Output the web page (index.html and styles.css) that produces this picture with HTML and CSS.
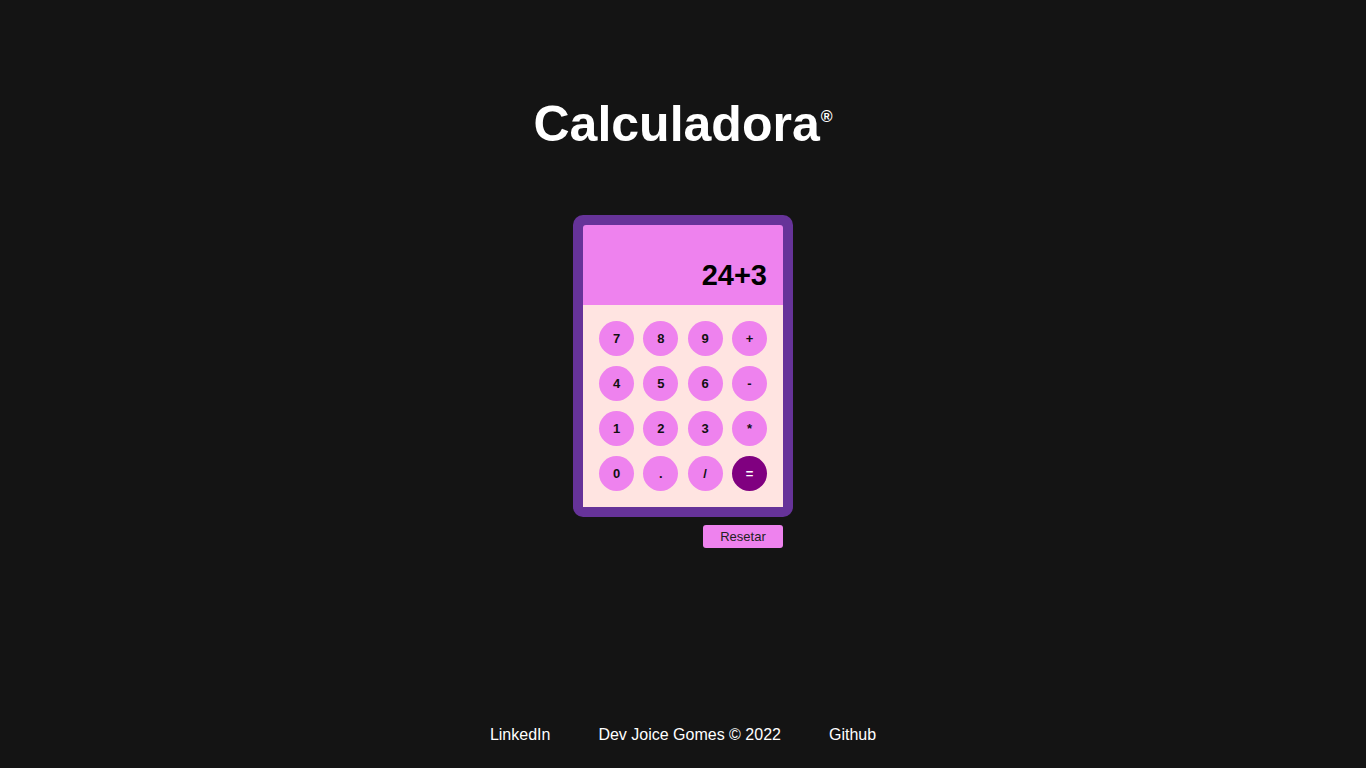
FILE: index.html
```html
<!DOCTYPE html>
<html lang="pt-BR">
<head>
<meta charset="UTF-8">
<title>Calculadora</title>
<link rel="stylesheet" href="styles.css">
</head>
<body>
<div class="page">
  <header class="header">
    <h1 class="title">Calculadora<sup class="reg">®</sup></h1>
  </header>
  <main class="main">
    <div class="calc">
      <div class="display">24+3</div>
      <div class="keys">
        <button class="key">7</button>
        <button class="key">8</button>
        <button class="key">9</button>
        <button class="key">+</button>
        <button class="key">4</button>
        <button class="key">5</button>
        <button class="key">6</button>
        <button class="key">-</button>
        <button class="key">1</button>
        <button class="key">2</button>
        <button class="key">3</button>
        <button class="key">*</button>
        <button class="key">0</button>
        <button class="key">.</button>
        <button class="key">/</button>
        <button class="key key-eq">=</button>
      </div>
    </div>
    <div class="actions">
      <button class="reset">Resetar</button>
    </div>
  </main>
  <footer class="footer">
    <a class="flink" href="#">LinkedIn</a>
    <span class="ftext">Dev Joice Gomes © 2022</span>
    <a class="flink" href="#">Github</a>
  </footer>
</div>
</body>
</html>
```
FILE: styles.css
```css
* { box-sizing: border-box; }
html, body { margin: 0; padding: 0; }
body {
  background: #141414;
  font-family: "Liberation Sans", Arial, sans-serif;
  color: #fff;
}
.page {
  min-height: 100vh;
  display: flex;
  flex-direction: column;
  align-items: center;
}
.header { padding-top: 96px; }
.title {
  margin: 0;
  font-size: 50px;
  font-weight: bold;
  line-height: 57px;
  text-align: center;
}
.reg {
  font-size: 16px;
  font-weight: bold;
  line-height: 16px;
  vertical-align: top;
  position: relative;
  top: 13px;
  margin-left: 1px;
}
.main {
  margin-top: 62px;
  display: flex;
  flex-direction: column;
  width: 220px;
}
.calc {
  background: #663399;
  border-radius: 10px;
  padding: 10px;
}
.display {
  height: 80px;
  background: #ee82ee;
  border-radius: 3px 3px 0 0;
  color: #000;
  font-size: 29px;
  font-weight: bold;
  display: flex;
  justify-content: flex-end;
  align-items: flex-end;
  padding: 0 16px 13px;
  line-height: 33px;
}
.keys {
  background: #ffe4e1;
  padding: 16px;
  display: grid;
  grid-template-columns: repeat(4, 35px);
  justify-content: space-between;
  row-gap: 10px;
}
.key {
  width: 35px;
  height: 35px;
  border-radius: 50%;
  border: none;
  background: #ee82ee;
  color: #111;
  font-family: "Liberation Sans", Arial, sans-serif;
  font-size: 13px;
  font-weight: bold;
  padding: 0;
}
.key-eq {
  background: #800080;
  color: #fff;
}
.actions {
  display: flex;
  justify-content: flex-end;
  padding: 8px 10px 0;
}
.reset {
  width: 80px;
  height: 23px;
  background: #ee82ee;
  border: none;
  border-radius: 3px;
  color: #222;
  font-family: "Liberation Sans", Arial, sans-serif;
  font-size: 13px;
  padding: 0;
}
.footer {
  margin-top: auto;
  padding-bottom: 24px;
  display: flex;
  gap: 48px;
  font-size: 16px;
  line-height: 18px;
}
.flink, .ftext { color: #fff; text-decoration: none; }
```
